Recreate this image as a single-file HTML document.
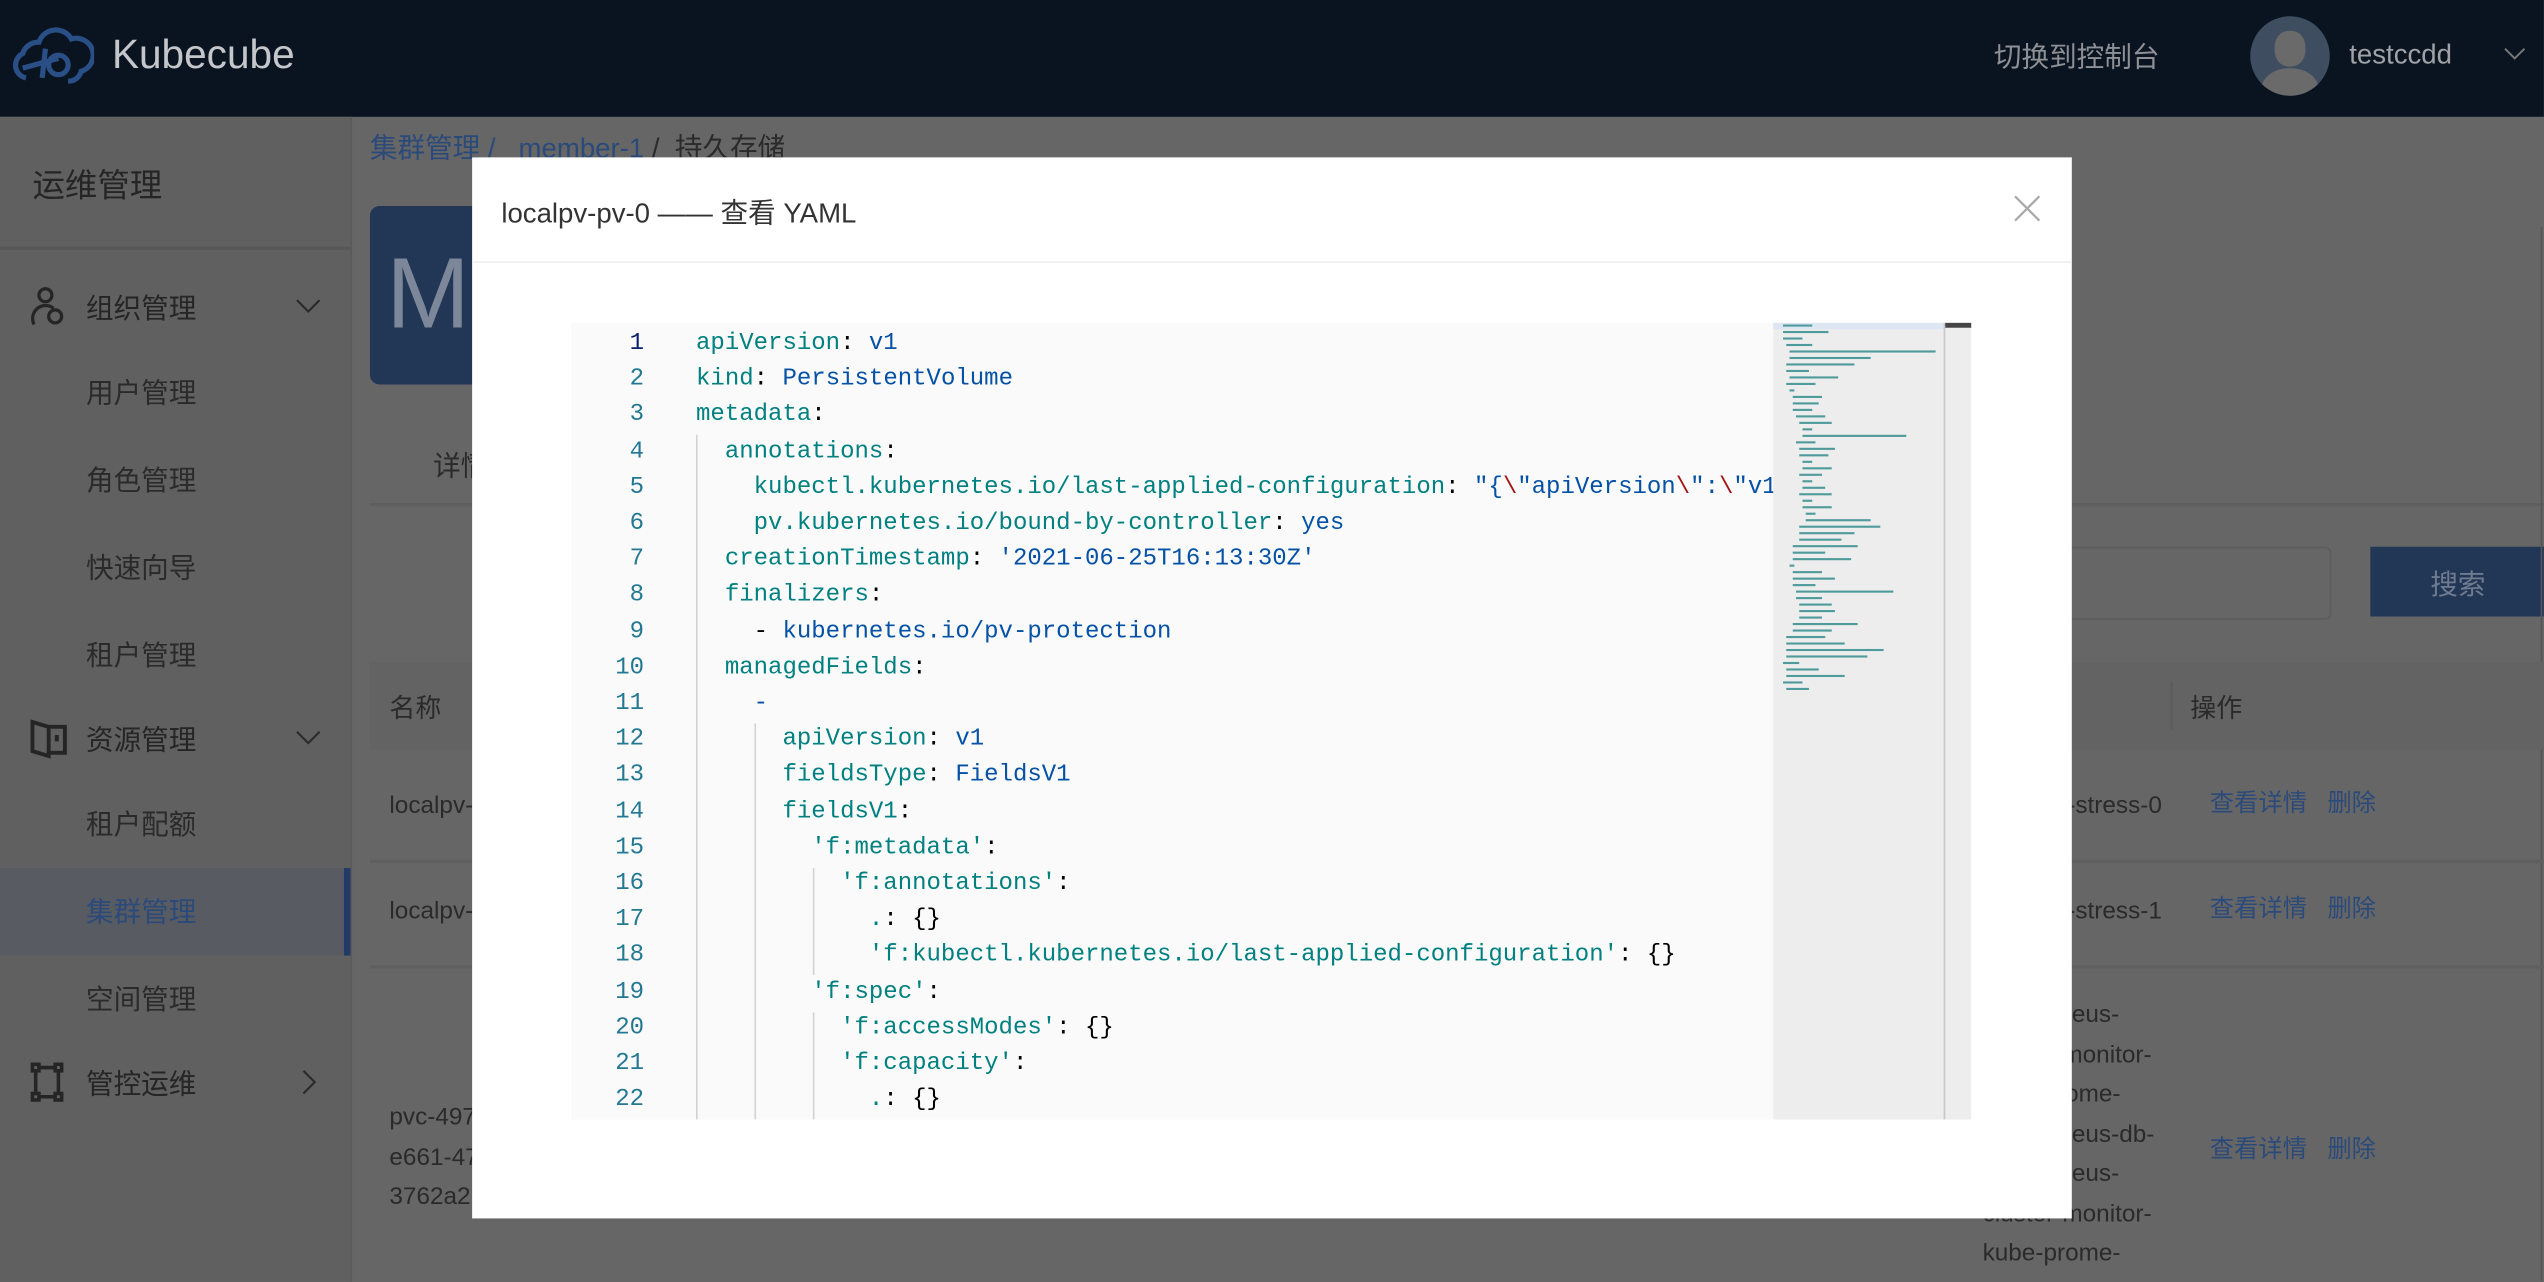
<!DOCTYPE html>
<html><head><meta charset="utf-8">
<style>
html,body{margin:0;padding:0;width:2544px;height:1282px;overflow:hidden;background:#666;}
#w{position:absolute;left:0;top:0;width:1568px;height:790px;transform:scale(1.6224);transform-origin:0 0;font-family:"Liberation Sans","Noto Sans CJK SC",sans-serif;background:#666;overflow:hidden}
.a{position:absolute;white-space:nowrap}
.cn{font-family:"Liberation Sans","Noto Sans CJK SC",sans-serif}
.mi{position:absolute;left:53px;font-size:17px;color:#2a2a2a}
.code{position:absolute;left:352px;top:199px;width:741px;height:491px;background:#fafafa;overflow:hidden}
.ln{position:absolute;left:0;width:45px;text-align:right;font-family:"Liberation Mono",monospace;font-size:14.8px;color:#237893}
.cl{position:absolute;left:77px;font-family:"Liberation Mono",monospace;font-size:14.8px;color:#000;white-space:pre}
.k{color:#008080}.v{color:#0451a5}.r{color:#a31515}
.g{position:absolute;width:1px;background:#d3d3d3}
</style></head><body><div id="w">
<!-- header -->
<div class="a" style="left:0;top:0;width:1568px;height:72px;background:#0a1421"></div>
<svg class="a" style="left:6px;top:14px" width="52" height="40" viewBox="0 0 52 40"><g fill="none" stroke="#2a4f86" stroke-width="3.2"><path d="M10 34 A8 8 0 0 1 8 19 A10 10 0 0 1 18 12 A11 11 0 0 1 38 10 A10 10 0 0 1 44 30 A8 8 0 0 1 36 36"/><path d="M8 28 L30 22 M22 16 L20 34"/><circle cx="30" cy="26" r="6"/></g></svg>
<div class="a" style="left:69px;top:20px;font-size:25px;color:#c4c6ca">Kubecube</div>
<div class="a cn" style="left:1229px;top:21px;font-size:17px;color:#8e9096">切换到控制台</div>
<div class="a" style="left:1387px;top:10px;width:49px;height:49px;border-radius:50%;background:#3e4d5f;overflow:hidden"><div class="a" style="left:15px;top:9px;width:19px;height:22px;border-radius:45%;background:#6a6a6a"></div><div class="a" style="left:7px;top:32px;width:35px;height:25px;border-radius:50% 50% 0 0;background:#6a6a6a"></div></div>
<div class="a" style="left:1448px;top:24px;font-size:17px;color:#a0a2a6">testccdd</div>
<svg class="a" style="left:1543px;top:28px" width="14" height="10"><path d="M1 2 L7 8 L13 2" fill="none" stroke="#777" stroke-width="1.2"/></svg>
<!-- sidebar -->
<div class="a" style="left:0;top:72px;width:216px;height:718px;background:#606060;border-right:1px solid #5a5a5a"></div>
<div class="a cn" style="left:20px;top:98px;font-size:20px;color:#252525">运维管理</div>
<div class="a" style="left:0;top:152px;width:216px;height:2px;background:#575757"></div>
<svg class="a" style="left:18px;top:176px" width="24" height="26"><g fill="none" stroke="#252525" stroke-width="2"><circle cx="10" cy="6" r="4"/><path d="M3 24 A8 8 0 0 1 15 14"/><circle cx="16" cy="19" r="4"/></g></svg>
<div class="a cn" style="left:53px;top:176px;font-size:17px;color:#252525">组织管理</div>
<svg class="a" style="left:182px;top:184px" width="16" height="10"><path d="M1 1 L8 8 L15 1" fill="none" stroke="#2a2a2a" stroke-width="1.3"/></svg>
<div class="mi cn" style="top:228px">用户管理</div>
<div class="mi cn" style="top:282px">角色管理</div>
<div class="mi cn" style="top:336px">快速向导</div>
<div class="mi cn" style="top:390px">租户管理</div>
<svg class="a" style="left:18px;top:442px" width="24" height="26"><g fill="none" stroke="#252525" stroke-width="2.4"><path d="M2 3 L12 6 L12 24 L2 21 Z"/><path d="M12 6 L22 6 L22 22 L12 22"/><path d="M17 11 L17 15"/></g></svg>
<div class="a cn" style="left:53px;top:442px;font-size:17px;color:#252525">资源管理</div>
<svg class="a" style="left:182px;top:450px" width="16" height="10"><path d="M1 1 L8 8 L15 1" fill="none" stroke="#2a2a2a" stroke-width="1.3"/></svg>
<div class="mi cn" style="top:494px">租户配额</div>
<div class="a" style="left:0;top:535px;width:216px;height:54px;background:#585c62"></div>
<div class="a" style="left:212px;top:535px;width:4px;height:54px;background:#223a66"></div>
<div class="mi cn" style="top:548px;color:#2b4a7a">集群管理</div>
<div class="mi cn" style="top:602px">空间管理</div>
<svg class="a" style="left:18px;top:654px" width="24" height="26"><g fill="none" stroke="#252525" stroke-width="2.2"><rect x="2" y="2" width="4" height="4"/><rect x="16" y="2" width="4" height="4"/><rect x="2" y="20" width="4" height="4"/><rect x="16" y="20" width="4" height="4"/><path d="M6 4 L16 4 M4 6 L4 20 M6 22 L16 22 M18 6 L18 20"/></g></svg>
<div class="a cn" style="left:53px;top:654px;font-size:17px;color:#252525">管控运维</div>
<svg class="a" style="left:186px;top:659px" width="10" height="16"><path d="M1 1 L8 8 L1 15" fill="none" stroke="#2a2a2a" stroke-width="1.3"/></svg>
<!-- content -->
<div class="a cn" style="left:228px;top:77px;font-size:17px;color:#2b4a7a">集群管理 / &nbsp;&nbsp;member-1 <span style="color:#2a2a2a">/ &nbsp;持久存储</span></div>
<div class="a" style="left:228px;top:127px;width:80px;height:110px;background:#223655;border-radius:6px"></div>
<div class="a" style="left:238px;top:146px;font-size:62px;color:#7c879a">M</div>
<div class="a cn" style="left:267px;top:273px;font-size:17px;color:#2a2a2a">详情</div>
<div class="a" style="left:228px;top:310px;width:1340px;height:2px;background:#5f5f5f"></div>
<div class="a" style="left:1250px;top:337px;width:185px;height:43px;border:1px solid #5c5c5c;border-radius:4px"></div>
<div class="a" style="left:1461px;top:337px;width:107px;height:43px;background:#223655"></div>
<div class="a cn" style="left:1498px;top:346px;font-size:17px;color:#6e7b90">搜索</div>
<div class="a" style="left:1566px;top:140px;width:1px;height:650px;background:#555"></div>
<div class="a" style="left:228px;top:408px;width:1340px;height:54px;background:#636363"></div>
<div class="a cn" style="left:240px;top:423px;font-size:16px;color:#2a2a2a">名称</div>
<div class="a" style="left:1338px;top:420px;width:1px;height:30px;background:#5a5a5a"></div>
<div class="a cn" style="left:1350px;top:423px;font-size:16px;color:#2a2a2a">操作</div>
<div class="a" style="left:228px;top:530px;width:1340px;height:2px;background:#5f5f5f"></div>
<div class="a" style="left:228px;top:595px;width:1340px;height:2px;background:#5f5f5f"></div>
<div class="a" style="left:240px;top:488px;font-size:15px;color:#2a2a2a">localpv-</div>
<div class="a" style="left:240px;top:553px;font-size:15px;color:#2a2a2a">localpv-</div>
<div class="a" style="left:240px;top:677px;font-size:15px;color:#2a2a2a;line-height:24.5px">pvc-497<br>e661-47<br>3762a2</div>
<div class="a" style="left:1250px;top:488px;font-size:15px;color:#2a2a2a">test-stress-0</div>
<div class="a" style="left:1250px;top:553px;font-size:15px;color:#2a2a2a">test-stress-1</div>
<div class="a" style="left:1222px;top:614px;font-size:15px;color:#2a2a2a;line-height:24.5px">prometheus-<br>cluster-monitor-<br>kube-prome-<br>prometheus-db-<br>prometheus-<br>cluster-monitor-<br>kube-prome-</div>
<div class="a cn" style="left:1362px;top:484px;font-size:15px;color:#2b4a7a">查看详情 &nbsp;&nbsp;删除</div>
<div class="a cn" style="left:1362px;top:549px;font-size:15px;color:#2b4a7a">查看详情 &nbsp;&nbsp;删除</div>
<div class="a cn" style="left:1362px;top:697px;font-size:15px;color:#2b4a7a">查看详情 &nbsp;&nbsp;删除</div>
<!-- modal -->
<div class="a" style="left:291px;top:97px;width:986px;height:654px;background:#fff"></div>
<div class="a cn" style="left:309px;top:117px;font-size:17px;color:#333">localpv-pv-0 —— 查看 YAML</div>
<svg class="a" style="left:1241px;top:120px" width="17" height="17"><path d="M1 1 L16 16 M16 1 L1 16" stroke="#aaa" stroke-width="1.4"/></svg>
<div class="a" style="left:291px;top:161px;width:986px;height:1px;background:#eee"></div>
<div class="code">
<div class="g" style="left:77px;top:69px;height:430px"></div>
<div class="g" style="left:113px;top:247px;height:250px"></div>
<div class="g" style="left:149px;top:336px;height:66px"></div>
<div class="g" style="left:149px;top:425px;height:72px"></div>
<div style="position:absolute;left:0;top:3px;width:741px;height:491px">
<div class="ln" style="top:2px;color:#0b216f">1</div><div class="cl" style="top:2px"><span class="k">apiVersion</span>: <span class="v">v1</span></div>
<div class="ln" style="top:24px">2</div><div class="cl" style="top:24px"><span class="k">kind</span>: <span class="v">PersistentVolume</span></div>
<div class="ln" style="top:46px">3</div><div class="cl" style="top:46px"><span class="k">metadata</span>:</div>
<div class="ln" style="top:69px">4</div><div class="cl" style="top:69px">  <span class="k">annotations</span>:</div>
<div class="ln" style="top:91px">5</div><div class="cl" style="top:91px">    <span class="k">kubectl.kubernetes.io/last-applied-configuration</span>: <span class="v">"{</span><span class="r">\</span><span class="v">"apiVersion</span><span class="r">\</span><span class="v">":</span><span class="r">\</span><span class="v">"v1</span></div>
<div class="ln" style="top:113px">6</div><div class="cl" style="top:113px">    <span class="k">pv.kubernetes.io/bound-by-controller</span>: <span class="v">yes</span></div>
<div class="ln" style="top:135px">7</div><div class="cl" style="top:135px">  <span class="k">creationTimestamp</span>: <span class="v">'2021-06-25T16:13:30Z'</span></div>
<div class="ln" style="top:157px">8</div><div class="cl" style="top:157px">  <span class="k">finalizers</span>:</div>
<div class="ln" style="top:180px">9</div><div class="cl" style="top:180px">    - <span class="v">kubernetes.io/pv-protection</span></div>
<div class="ln" style="top:202px">10</div><div class="cl" style="top:202px">  <span class="k">managedFields</span>:</div>
<div class="ln" style="top:224px">11</div><div class="cl" style="top:224px">    <span class="v">-</span></div>
<div class="ln" style="top:246px">12</div><div class="cl" style="top:246px">      <span class="k">apiVersion</span>: <span class="v">v1</span></div>
<div class="ln" style="top:268px">13</div><div class="cl" style="top:268px">      <span class="k">fieldsType</span>: <span class="v">FieldsV1</span></div>
<div class="ln" style="top:291px">14</div><div class="cl" style="top:291px">      <span class="k">fieldsV1</span>:</div>
<div class="ln" style="top:313px">15</div><div class="cl" style="top:313px">        <span class="k">'f:metadata'</span>:</div>
<div class="ln" style="top:335px">16</div><div class="cl" style="top:335px">          <span class="k">'f:annotations'</span>:</div>
<div class="ln" style="top:357px">17</div><div class="cl" style="top:357px">            <span class="k">.</span>: {}</div>
<div class="ln" style="top:379px">18</div><div class="cl" style="top:379px">            <span class="k">'f:kubectl.kubernetes.io/last-applied-configuration'</span>: {}</div>
<div class="ln" style="top:402px">19</div><div class="cl" style="top:402px">        <span class="k">'f:spec'</span>:</div>
<div class="ln" style="top:424px">20</div><div class="cl" style="top:424px">          <span class="k">'f:accessModes'</span>: {}</div>
<div class="ln" style="top:446px">21</div><div class="cl" style="top:446px">          <span class="k">'f:capacity'</span>:</div>
<div class="ln" style="top:468px">22</div><div class="cl" style="top:468px">            <span class="k">.</span>: {}</div>
</div>
</div>
<div class="a" style="left:1093px;top:199px;width:122px;height:491px;background:#ededed"></div>
<div class="a" style="left:1093px;top:199px;width:106px;height:4px;background:#dde6f3"></div>
<div class="a" style="left:1198px;top:199px;width:1px;height:491px;background:#c8c8c8"></div>
<div class="a" style="left:1199px;top:199px;width:16px;height:3px;background:#444"></div>
<svg class="a" style="left:1099px;top:200px" width="98" height="226"><g fill="#4f9a9a">
<rect x="0" y="0" width="18" height="1.3"/><rect x="0" y="4" width="28" height="1.3"/><rect x="0" y="8" width="12" height="1.3"/><rect x="2" y="12" width="16" height="1.3"/><rect x="4" y="16" width="90" height="1.3"/><rect x="4" y="20" width="50" height="1.3"/><rect x="2" y="24" width="42" height="1.3"/><rect x="2" y="28" width="14" height="1.3"/><rect x="4" y="32" width="30" height="1.3"/><rect x="2" y="36" width="18" height="1.3"/><rect x="4" y="40" width="3" height="1.3"/><rect x="6" y="44" width="18" height="1.3"/><rect x="6" y="48" width="16" height="1.3"/><rect x="6" y="52" width="12" height="1.3"/><rect x="8" y="56" width="18" height="1.3"/><rect x="10" y="60" width="20" height="1.3"/><rect x="12" y="64" width="6" height="1.3"/><rect x="12" y="68" width="64" height="1.3"/><rect x="8" y="72" width="12" height="1.3"/><rect x="10" y="76" width="22" height="1.3"/><rect x="10" y="80" width="18" height="1.3"/><rect x="12" y="84" width="6" height="1.3"/><rect x="12" y="88" width="18" height="1.3"/><rect x="10" y="92" width="14" height="1.3"/><rect x="12" y="96" width="6" height="1.3"/><rect x="12" y="100" width="14" height="1.3"/><rect x="10" y="104" width="20" height="1.3"/><rect x="12" y="108" width="6" height="1.3"/><rect x="12" y="112" width="18" height="1.3"/><rect x="14" y="116" width="6" height="1.3"/><rect x="14" y="120" width="40" height="1.3"/><rect x="10" y="124" width="50" height="1.3"/><rect x="10" y="128" width="34" height="1.3"/><rect x="10" y="132" width="26" height="1.3"/><rect x="6" y="136" width="40" height="1.3"/><rect x="6" y="140" width="20" height="1.3"/><rect x="6" y="144" width="36" height="1.3"/><rect x="4" y="148" width="3" height="1.3"/><rect x="6" y="152" width="18" height="1.3"/><rect x="6" y="156" width="26" height="1.3"/><rect x="6" y="160" width="14" height="1.3"/><rect x="8" y="164" width="60" height="1.3"/><rect x="8" y="168" width="16" height="1.3"/><rect x="10" y="172" width="20" height="1.3"/><rect x="10" y="176" width="22" height="1.3"/><rect x="10" y="180" width="14" height="1.3"/><rect x="6" y="184" width="40" height="1.3"/><rect x="6" y="188" width="24" height="1.3"/><rect x="2" y="192" width="24" height="1.3"/><rect x="2" y="196" width="36" height="1.3"/><rect x="2" y="200" width="60" height="1.3"/><rect x="2" y="204" width="50" height="1.3"/><rect x="0" y="208" width="10" height="1.3"/><rect x="2" y="212" width="20" height="1.3"/><rect x="2" y="216" width="36" height="1.3"/><rect x="0" y="220" width="12" height="1.3"/><rect x="2" y="224" width="14" height="1.3"/>
</g></svg>
</div></body></html>
